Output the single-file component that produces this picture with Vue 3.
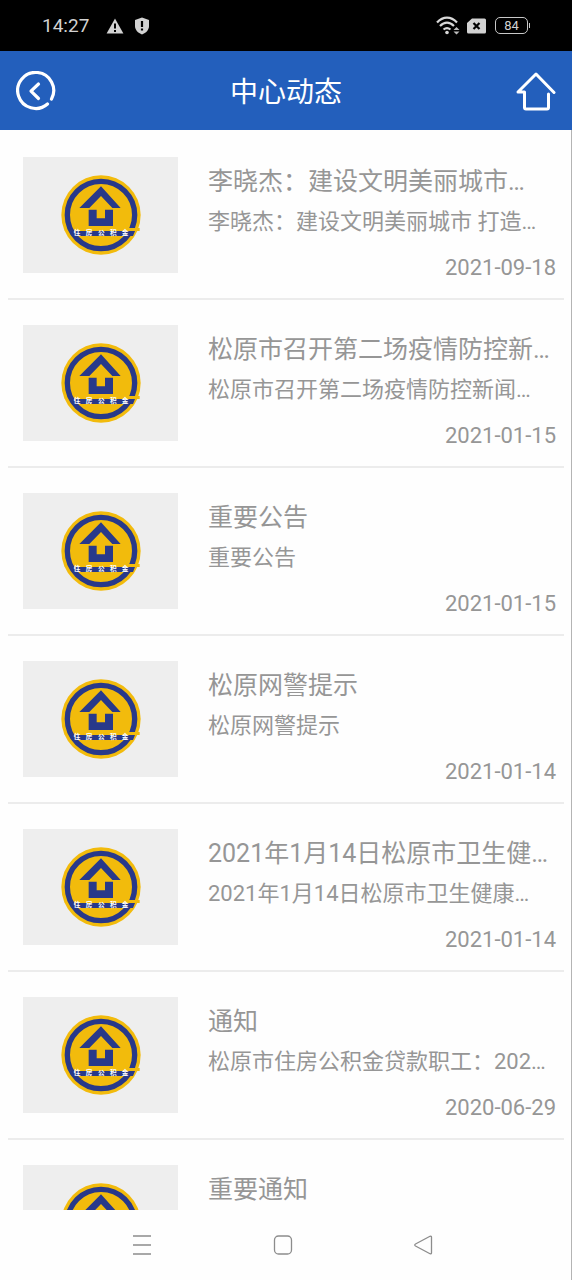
<script setup>
const articles = [
  { id: 1, title: '李晓杰：建设文明美丽城市…', summary: '李晓杰：建设文明美丽城市 打造…', date: '2021-09-18' },
  { id: 2, title: '松原市召开第二场疫情防控新…', summary: '松原市召开第二场疫情防控新闻…', date: '2021-01-15' },
  { id: 3, title: '重要公告', summary: '重要公告', date: '2021-01-15' },
  { id: 4, title: '松原网警提示', summary: '松原网警提示', date: '2021-01-14' },
  { id: 5, title: '2021年1月14日松原市卫生健…', summary: '2021年1月14日松原市卫生健康…', date: '2021-01-14' },
  { id: 6, title: '通知', summary: '松原市住房公积金贷款职工：202…', date: '2020-06-29' },
  { id: 7, title: '重要通知', summary: '', date: '' },
]
const logoChars = [
  { char: '住', x: 80 },
  { char: '房', x: 116 },
  { char: '公', x: 153 },
  { char: '积', x: 189 },
  { char: '金', x: 224 },
]
</script>

<template>
  <div class="screen">
    <div class="status">
      <div class="status-group">
        <span class="clock">14:27</span>
        <svg class="warn" width="18" height="16" viewBox="0 0 18 16">
          <path d="M9 0.5 17.4 15.5H0.6z" fill="#d2d2d2" />
          <path d="M9 5.5v5M9 12v2" stroke="#000" stroke-width="2" />
        </svg>
        <svg width="16" height="18" viewBox="0 0 16 18">
          <path d="M8 0.5 15 3v6c0 4-3 7-7 8.500C4 16 1 13 1 9V3z" fill="#d2d2d2" />
          <path d="M8 4v6M8 11.500v2" stroke="#000" stroke-width="2.200" />
        </svg>
      </div>
      <div class="status-group">
        <svg width="24" height="19" viewBox="0 0 24 19" fill="none" stroke="#d8d8d8" stroke-width="2.200">
          <path d="M1 6.500c6-6.500 14-6.500 20 0" />
          <path d="M4 10c4.500-4.500 9.500-4.500 14 0" />
          <path d="M7.500 13.500c2.500-2 4.500-2 7 0" />
          <circle cx="11" cy="16.500" r="1.800" fill="#d8d8d8" stroke="none" />
          <path d="M17.500 14 20.500 11 23.500 14zM17.500 15.500 20.500 18.500 23.500 15.500z" fill="#bbb" stroke="none" />
        </svg>
        <svg class="sim" width="19" height="16" viewBox="0 0 19 16">
          <path d="M5 0.500h12.500q1.500 0 1.500 1.500v12q0 1.500-1.500 1.500H1.500Q0 15.500 0 14V5z" fill="#d2d2d2" />
          <path d="M6.500 5l6 6M12.500 5l-6 6" stroke="#000" stroke-width="2.200" />
        </svg>
        <span class="battery">84</span>
      </div>
    </div>

    <header class="header">
      <button class="icon-button" type="button" aria-label="返回">
        <svg width="40" height="40" viewBox="0 0 40 40" fill="none" stroke="#fff" stroke-linecap="round" stroke-linejoin="round">
          <path d="M35.500 28A18 18 0 1 0 31.500 33" stroke-width="3.200" />
          <path d="M22.500 13 15 20.200 22.500 27.500" stroke-width="3.200" />
        </svg>
      </button>
      <h1>中心动态</h1>
      <button class="icon-button" type="button" aria-label="首页">
        <svg width="40" height="40" viewBox="0 0 40 40" fill="none" stroke="#fff" stroke-width="3" stroke-linecap="round" stroke-linejoin="round">
          <path d="M32.500 23V36.500q0 1.500-1.500 1.500H10q-1.500 0-1.500-1.500V21H2L20 3 38 21.500" />
        </svg>
      </button>
    </header>

    <main class="list">
      <article v-for="item in articles" :key="item.id" class="row">
        <div class="thumb">
          <svg width="80" height="80" viewBox="32 28 240 240" role="img" aria-label="住房公积金">
            <circle cx="152" cy="148" r="119" fill="#f2bb0c" />
            <circle cx="152" cy="148" r="101" fill="none" stroke="#28398a" stroke-width="16" />
            <path d="M152 62 211 127H186L152 91 117 127H87z" fill="#28398a" />
            <path d="M115 132H139V158H164V132H188V181H115z" fill="#28398a" />
            <path d="M194 187H268V196H194z" fill="#f2bb0c" />
            <path d="M62 196H254L248 211H68z" fill="#28398a" />
            <text v-for="mark in logoChars" :key="mark.char" class="logo-text" :x="mark.x" y="209">{{ mark.char }}</text>
          </svg>
        </div>
        <div class="body">
          <h2>{{ item.title }}</h2>
          <p>{{ item.summary }}</p>
          <time>{{ item.date }}</time>
        </div>
      </article>
    </main>

    <nav class="nav">
      <button type="button" aria-label="菜单">
        <svg width="22" height="22" viewBox="0 0 22 22" fill="none" stroke="#8c8c8c" stroke-width="1.300">
          <path d="M2 2H20M2 11H20M2 20H20" />
        </svg>
      </button>
      <button type="button" aria-label="主屏幕">
        <svg width="22" height="22" viewBox="0 0 22 22" fill="none" stroke="#8c8c8c" stroke-width="1.300">
          <rect x="2.500" y="2" width="17" height="18" rx="4" />
        </svg>
      </button>
      <button type="button" aria-label="后退">
        <svg width="22" height="22" viewBox="0 0 22 22" fill="none" stroke="#8c8c8c" stroke-width="1.300" stroke-linejoin="round">
          <path d="M17 2.300 2.500 10q-1.500 1 0 2L17 19.700q1.500 0.500 1.500-1V3.300q0-1.500-1.500-1z" />
        </svg>
      </button>
    </nav>
  </div>
</template>

<style>
body {
  margin: 0;
}
</style>

<style scoped>
.screen {
  display: flex;
  flex-direction: column;
  height: 100vh;
  background: #fefefe;
  font-family: Roboto, "Noto Sans CJK SC", sans-serif;
  color: #969696;
}
.status {
  display: flex;
  flex: none;
  justify-content: space-between;
  align-items: center;
  height: 51px;
  box-sizing: border-box;
  padding: 0 44px 0 42px;
  background: #000;
  color: #d2d2d2;
}
.status-group {
  display: flex;
  align-items: center;
}
.clock {
  font-size: 19px;
  line-height: 24px;
}
.warn {
  margin: 0 10px 0 17px;
}
.sim {
  margin: 0 9px 0 7px;
}
.battery {
  position: relative;
  box-sizing: border-box;
  width: 33px;
  height: 17px;
  border: 1px solid #c8c8c8;
  border-radius: 5px;
  font-size: 13px;
  line-height: 16px;
  text-align: center;
}
.battery::after {
  content: "";
  position: absolute;
  top: 5px;
  right: -3px;
  width: 1px;
  height: 5px;
  background: #c8c8c8;
}
.header {
  display: flex;
  flex: none;
  justify-content: space-between;
  align-items: center;
  height: 79px;
  box-sizing: border-box;
  padding: 0 16px;
  background: #235fbc;
  color: #fff;
}
h1 {
  margin: 0;
  padding-top: 5px;
  font-size: 28px;
  font-weight: 400;
  line-height: 40px;
}
button {
  display: flex;
  padding: 0;
  border: 0;
  background: none;
}
.list {
  flex: 1;
  min-height: 0;
  padding: 2px 7px 0 8px;
  overflow-y: auto;
  scrollbar-width: none;
  border-right: 1px solid #b4b4b4;
}
.row {
  display: flex;
  gap: 30px;
  box-sizing: border-box;
  height: 168px;
  padding: 25px 8px 0 15px;
  border-bottom: 2px solid #ececec;
}
.thumb {
  display: flex;
  flex: none;
  justify-content: center;
  align-items: center;
  width: 155px;
  height: 116px;
  background: #eee;
}
.logo-text {
  font-family: "Noto Sans CJK SC", sans-serif;
  font-size: 20px;
  font-weight: 700;
  text-anchor: middle;
  fill: #fff;
}
.body {
  display: flex;
  flex: 1;
  flex-direction: column;
  min-width: 0;
  white-space: nowrap;
}
h2,
p {
  margin: 0;
  font-weight: 400;
}
h2 {
  font-size: 25px;
  line-height: 50px;
}
p {
  height: 30px;
  font-size: 22px;
  line-height: 30px;
}
time {
  margin-top: 15px;
  font-size: 22px;
  line-height: 32px;
  text-align: right;
}
.nav {
  display: flex;
  flex: none;
  justify-content: center;
  align-items: center;
  gap: 119px;
  height: 70px;
  padding-right: 5px;
  border-right: 1px solid #b4b4b4;
}
</style>
